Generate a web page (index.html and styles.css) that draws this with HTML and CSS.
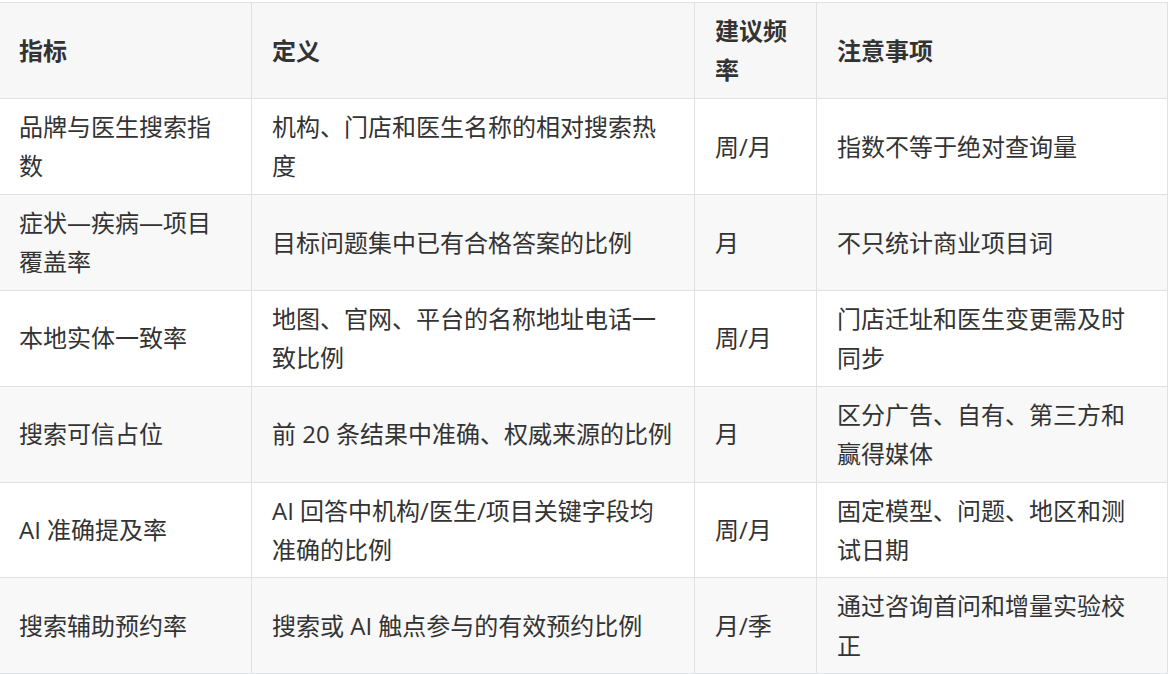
FILE: index.html
```html
<!DOCTYPE html>
<html lang="zh-CN">
<head>
<meta charset="utf-8">
<link rel="stylesheet" href="styles.css">
</head>
<body>
<table class="metrics">
  <colgroup>
    <col class="c1"><col class="c2"><col class="c3"><col class="c4">
  </colgroup>
  <thead>
    <tr><th>指标</th><th>定义</th><th>建议频率</th><th>注意事项</th></tr>
  </thead>
  <tbody>
    <tr><td>品牌与医生搜索指数</td><td>机构、门店和医生名称的相对搜索热度</td><td>周/月</td><td>指数不等于绝对查询量</td></tr>
    <tr><td>症状—疾病—项目覆盖率</td><td>目标问题集中已有合格答案的比例</td><td>月</td><td>不只统计商业项目词</td></tr>
    <tr><td>本地实体一致率</td><td>地图、官网、平台的名称地址电话一致比例</td><td>周/月</td><td>门店迁址和医生变更需及时同步</td></tr>
    <tr><td>搜索可信占位</td><td>前 20 条结果中准确、权威来源的比例</td><td>月</td><td>区分广告、自有、第三方和赢得媒体</td></tr>
    <tr><td>AI 准确提及率</td><td>AI 回答中机构/医生/项目关键字段均准确的比例</td><td>周/月</td><td>固定模型、问题、地区和测试日期</td></tr>
    <tr><td>搜索辅助预约率</td><td>搜索或 AI 触点参与的有效预约比例</td><td>月/季</td><td>通过咨询首问和增量实验校正</td></tr>
  </tbody>
</table>
</body>
</html>
```
FILE: styles.css
```css
html, body {
  margin: 0;
  padding: 0;
  background: #ffffff;
}
body {
  font-family: "Open Sans", "Noto Sans CJK SC", sans-serif;
  font-size: 24px;
  color: #333333;
}
.metrics {
  border-collapse: collapse;
  table-layout: fixed;
  width: 1169px;
  margin: 2px 0 0 -2px;
}
.c1 { width: 253px; }
.c2 { width: 443px; }
.c3 { width: 122px; }
.c4 { width: 351px; }
.metrics th,
.metrics td {
  border: 1px solid #dfe2e5;
  padding: 8px 20px;
  line-height: 39.45px;
  text-align: left;
  vertical-align: middle;
}
.metrics th {
  font-weight: 700;
  background: #f7f7f7;
}
.metrics tbody tr:nth-child(even) td {
  background: #f8f8f8;
}
```
